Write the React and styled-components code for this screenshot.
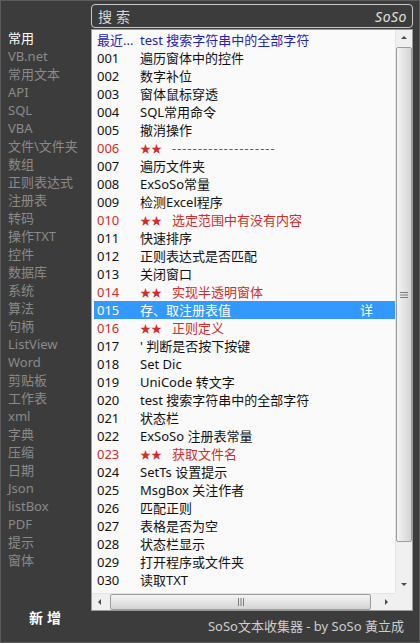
import React from "react";
import styled, { createGlobalStyle } from "styled-components";

const GlobalStyle = createGlobalStyle`
  html, body {
    margin: 0;
    padding: 0;
    background: #3c3c3c;
  }
  * {
    box-sizing: border-box;
  }
`;

const FONT = `"Noto Sans", "Noto Sans CJK SC", sans-serif`;

const Window = styled.div`
  width: 420px;
  height: 643px;
  background: #3c3c3c;
  border: 1px solid #5c5c5c;
  display: grid;
  grid-template-columns: 90px 1fr;
  grid-template-rows: 25px 582px 1fr;
  padding: 3px 6px 0 0;
  font-family: ${FONT};
  font-size: 13px;
  overflow: hidden;
`;

const SearchBox = styled.div`
  grid-column: 2;
  height: 24px;
  border: 1px solid #c8c8c8;
  border-radius: 4px;
  display: flex;
  align-items: center;
  justify-content: space-between;
  padding: 0 5px 0 6px;
  color: #d8d8d8;
`;

const SearchLabel = styled.span`
  font-size: 14px;
  letter-spacing: 4px;
`;

const Brand = styled.span`
  font-style: italic;
  font-size: 14px;
  color: #e0e0e0;
  letter-spacing: 0.5px;
`;

const Sidebar = styled.ul`
  list-style: none;
  margin: 0;
  padding: 0 0 0 7px;
`;

const SideItem = styled.li`
  height: 18px;
  line-height: 18px;
  color: ${(p) => (p.$active ? "#ffffff" : "#8a8a8a")};
  white-space: nowrap;
`;

const ListFrame = styled.div`
  display: grid;
  grid-template-columns: 1fr 17px;
  grid-template-rows: 1fr 17px;
  background: #fafafa;
  border: 1px solid #9a9a9a;
  overflow: hidden;
`;

const Viewport = styled.div`
  overflow: hidden;
  padding: 1px 0 0 2px;
`;

const Row = styled.div`
  display: flex;
  height: 18px;
  line-height: 18px;
  padding-left: 3px;
  padding-right: 22px;
  white-space: nowrap;
  color: ${(p) =>
    p.$selected ? "#ffffff" : p.$kind === "red" ? "#d42a2a" : p.$kind === "blue" ? "#1e22b8" : "#111111"};
  background: ${(p) => (p.$selected ? "#3399ff" : "transparent")};
`;

const Num = styled.span`
  width: 43px;
  flex: none;
`;

const Title = styled.span`
  flex: 1;
  letter-spacing: ${(p) => (p.$wide ? "1px" : "0")};
`;

const Stars = styled.span`
  display: inline-block;
  width: 32px;
  font-size: 11px;
  letter-spacing: 0;
`;

const Detail = styled.span`
  flex: none;
`;

const VBar = styled.div`
  display: flex;
  flex-direction: column;
  background: #f0f0f0;
  border-left: 1px solid #e4e4e4;
`;

const HBar = styled.div`
  display: flex;
  background: #f0f0f0;
  border-top: 1px solid #e4e4e4;
`;

const Corner = styled.div`
  background: #f0f0f0;
`;

const Arrow = styled.div`
  flex: none;
  width: 16px;
  height: 16px;
  display: flex;
  align-items: center;
  justify-content: center;
`;

const Spacer = styled.div`
  flex: 1;
`;

const Thumb = styled.div`
  flex: none;
  display: flex;
  align-items: center;
  justify-content: center;
  border: 1px solid #9c9c9c;
  border-radius: 2px;
  background: ${(p) =>
    p.$vertical
      ? "linear-gradient(to right, #f4f4f4, #e4e4e4 50%, #d4d4d4)"
      : "linear-gradient(to bottom, #f4f4f4, #e4e4e4 50%, #d4d4d4)"};
  margin: ${(p) => (p.$vertical ? "1px 0 0 0" : "0 0 0 2px")};
  width: ${(p) => (p.$vertical ? "16px" : "261px")};
  height: ${(p) => (p.$vertical ? "495px" : "16px")};
`;

const Footer = styled.div`
  grid-column: 1 / 3;
  display: grid;
  grid-template-columns: 90px 1fr;
`;

const AddButton = styled.div`
  font-size: 14px;
  font-weight: bold;
  color: #ffffff;
  letter-spacing: 4px;
  text-align: center;
  padding: 0 0 0 2px;
  line-height: 16px;
  margin-top: -1px;
`;

const Credit = styled.div`
  text-align: right;
  color: #cfcfcf;
  line-height: 16px;
  padding: 7px 9px 0 0;
`;

const Tri = ({ dir }) => {
  const pts = {
    up: "1,5 4,2 7,5",
    down: "1,2 4,5 7,2",
    left: "5,1 2,4 5,7",
    right: "2,1 5,4 2,7",
  }[dir];
  return (
    <svg width="8" height="8" viewBox="0 0 8 8">
      <polygon points={pts} fill="#4a4a4a" />
    </svg>
  );
};

const Grip = ({ vertical }) => (
  <svg width="8" height="8" viewBox="0 0 8 8">
    {[1, 3.5, 6].map((v) =>
      vertical ? (
        <rect key={v} x="0" y={v} width="8" height="1" fill="#7a7a7a" />
      ) : (
        <rect key={v} x={v} y="0" width="1" height="8" fill="#7a7a7a" />
      )
    )}
  </svg>
);

const categories = [
  "常用", "VB.net", "常用文本", "API", "SQL", "VBA", "文件\\文件夹", "数组",
  "正则表达式", "注册表", "转码", "操作TXT", "控件", "数据库", "系统", "算法",
  "句柄", "ListView", "Word", "剪贴板", "工作表", "xml", "字典", "压缩", "日期",
  "Json", "listBox", "PDF", "提示", "窗体",
];

const rows = [
  { n: "最近...", t: "test 搜索字符串中的全部字符", k: "blue" },
  { n: "001", t: "遍历窗体中的控件" },
  { n: "002", t: "数字补位" },
  { n: "003", t: "窗体鼠标穿透" },
  { n: "004", t: "SQL常用命令" },
  { n: "005", t: "撤消操作" },
  { n: "006", t: "--------------------", k: "red", star: true, wide: true },
  { n: "007", t: "遍历文件夹" },
  { n: "008", t: "ExSoSo常量" },
  { n: "009", t: "检测Excel程序" },
  { n: "010", t: "选定范围中有没有内容", k: "red", star: true },
  { n: "011", t: "快速排序" },
  { n: "012", t: "正则表达式是否匹配" },
  { n: "013", t: "关闭窗口" },
  { n: "014", t: "实现半透明窗体", k: "red", star: true },
  { n: "015", t: "存、取注册表值", sel: true, d: "详" },
  { n: "016", t: "正则定义", k: "red", star: true },
  { n: "017", t: "' 判断是否按下按键" },
  { n: "018", t: "Set Dic" },
  { n: "019", t: "UniCode 转文字" },
  { n: "020", t: "test 搜索字符串中的全部字符" },
  { n: "021", t: "状态栏" },
  { n: "022", t: "ExSoSo 注册表常量" },
  { n: "023", t: "获取文件名", k: "red", star: true },
  { n: "024", t: "SetTs 设置提示" },
  { n: "025", t: "MsgBox 关注作者" },
  { n: "026", t: "匹配正则" },
  { n: "027", t: "表格是否为空" },
  { n: "028", t: "状态栏显示" },
  { n: "029", t: "打开程序或文件夹" },
  { n: "030", t: "读取TXT" },
  { n: "031", t: "run dll" },
];

export default function App() {
  return (
    <>
      <GlobalStyle />
      <Window>
        <SearchBox>
          <SearchLabel>搜索</SearchLabel>
          <Brand>SoSo</Brand>
        </SearchBox>

        <Sidebar>
          {categories.map((c, i) => (
            <SideItem key={c} $active={i === 0}>
              {c}
            </SideItem>
          ))}
        </Sidebar>

        <ListFrame>
          <Viewport>
            {rows.map((r) => (
              <Row key={r.n} $kind={r.k} $selected={r.sel}>
                <Num>{r.n}</Num>
                <Title $wide={r.wide}>
                  {r.star && <Stars>★★</Stars>}
                  {r.t}
                </Title>
                {r.d && <Detail>{r.d}</Detail>}
              </Row>
            ))}
          </Viewport>
          <VBar>
            <Arrow>
              <Tri dir="up" />
            </Arrow>
            <Thumb $vertical>
              <Grip vertical />
            </Thumb>
            <Spacer />
            <Arrow>
              <Tri dir="down" />
            </Arrow>
          </VBar>
          <HBar>
            <Arrow>
              <Tri dir="left" />
            </Arrow>
            <Thumb>
              <Grip />
            </Thumb>
            <Spacer />
            <Arrow>
              <Tri dir="right" />
            </Arrow>
          </HBar>
          <Corner />
        </ListFrame>

        <Footer>
          <AddButton>新增</AddButton>
          <Credit>SoSo文本收集器 - by SoSo 黃立成</Credit>
        </Footer>
      </Window>
    </>
  );
}
